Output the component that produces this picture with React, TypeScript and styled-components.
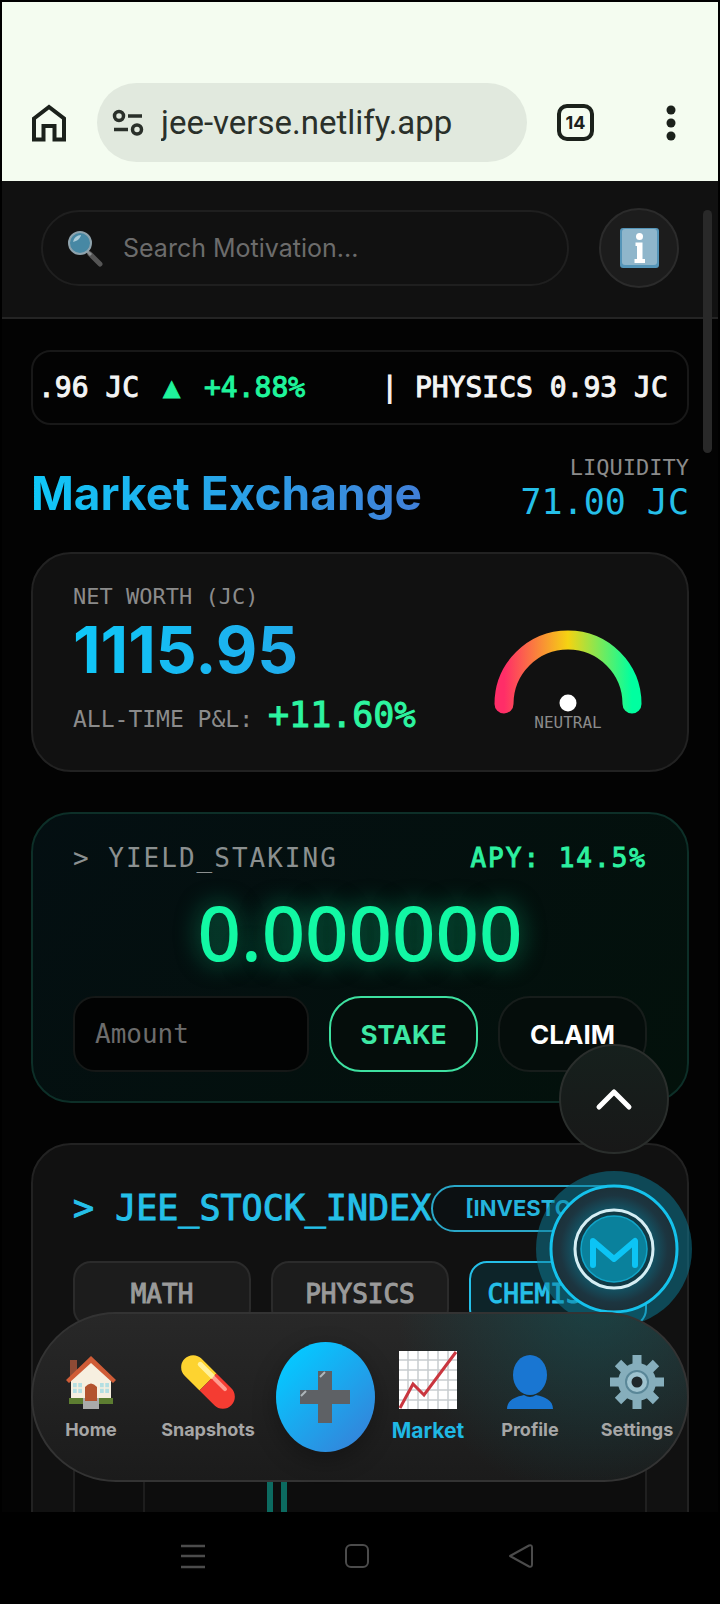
import React from "react";
import styled, { createGlobalStyle } from "styled-components";

const sans = `Inter, "Open Sans", sans-serif`;
const mono = `"DejaVu Sans Mono", monospace`;

const GlobalStyle = createGlobalStyle`
  * {
    box-sizing: border-box;
  }
  body {
    margin: 0;
    background: #000;
    color: #fff;
    font-family: ${sans};
  }
  button, input {
    font-family: inherit;
    margin: 0;
  }
  svg {
    display: block;
    flex: none;
  }
`;

const Phone = styled.div`
  display: flex;
  flex-direction: column;
  height: 100vh;
  padding: 2px 2px 0;
  overflow: hidden;
`;

const BrowserBar = styled.header`
  display: flex;
  align-items: center;
  flex: none;
  padding: 81px 41px 19px 29px;
  background: #f4fcf0;
`;

const BarButton = styled.button`
  display: flex;
  flex: none;
  padding: 0;
  border: 0;
  background: none;
`;

const Address = styled.div`
  display: flex;
  align-items: center;
  flex: 1;
  gap: 17px;
  min-width: 0;
  height: 79px;
  margin: 0 30px;
  padding: 0 15px;
  border-radius: 40px;
  background: #e1e9de;
`;

const AddressInput = styled.input`
  flex: 1;
  min-width: 0;
  padding: 0;
  border: 0;
  outline: 0;
  background: none;
  color: #2a302a;
  font-family: Roboto, sans-serif;
  font-size: 33px;
`;

const TabCount = styled.button`
  flex: none;
  width: 37px;
  height: 37px;
  margin-right: 71px;
  padding: 0;
  border: 4px solid #1b211b;
  border-radius: 10px;
  background: none;
  color: #1b211b;
  font-size: 18px;
  font-weight: 700;
  line-height: 28px;
`;

const Viewport = styled.div`
  position: relative;
  display: flex;
  flex-direction: column;
  flex: 1;
  min-height: 0;
  overflow: hidden;
  background: #030303;
`;

const SearchHeader = styled.div`
  display: flex;
  align-items: flex-start;
  justify-content: space-between;
  gap: 30px;
  flex: none;
  padding: 27px 39px 29px 39px;
  border-bottom: 2px solid #242424;
  background: #111;
`;

const SearchBox = styled.label`
  display: flex;
  align-items: center;
  flex: 1;
  gap: 19px;
  height: 76px;
  margin-top: 2px;
  padding: 0 23px;
  border: 2px solid #1f1f1f;
  border-radius: 38px;
`;

const SearchInput = styled.input`
  flex: 1;
  min-width: 0;
  padding: 0;
  border: 0;
  outline: 0;
  background: none;
  color: #fff;
  font-size: 25px;
  &::placeholder {
    color: #6c6c6c;
    opacity: 1;
  }
`;

const InfoButton = styled.button`
  display: flex;
  align-items: center;
  justify-content: center;
  width: 80px;
  height: 80px;
  padding: 0;
  border: 2px solid #2b2b2b;
  border-radius: 50%;
  background: #1c1c1c;
`;

const Content = styled.main`
  display: flex;
  flex-direction: column;
  flex: none;
  padding: 31px 29px;
`;

const Ticker = styled.div`
  display: flex;
  align-items: center;
  gap: 24px;
  height: 75px;
  padding: 0 5px;
  overflow: hidden;
  border: 2px solid #181818;
  border-radius: 20px;
  font-family: ${mono};
  font-size: 28px;
  white-space: nowrap;
  -webkit-text-stroke: 1px currentColor;
`;

const TickerItem = styled.span<{ $up?: boolean; $last?: boolean }>`
  color: ${(p) => (p.$up ? "#1ff59b" : "#f4f4f4")};
  margin-left: ${(p) => (p.$last ? "52px" : "0")};
`;

const TitleRow = styled.div`
  display: flex;
  align-items: flex-end;
  justify-content: space-between;
  height: 98px;
`;

const PageTitle = styled.h1`
  margin: 0;
  background: linear-gradient(90deg, #0fc8f8, #417fd8);
  background-clip: text;
  -webkit-background-clip: text;
  color: transparent;
  font-size: 46px;
  font-weight: 700;
  line-height: 60px;
`;

const Liquidity = styled.div`
  font-family: ${mono};
  text-align: right;
`;

const Caption = styled.div<{ $size?: number; $line?: number }>`
  color: #8b8b8b;
  font-family: ${mono};
  font-size: ${(p) => p.$size ?? 22}px;
  line-height: ${(p) => p.$line ?? 26}px;
`;

const Balance = styled.div`
  color: #25bfe8;
  font-size: 35px;
  line-height: 42px;
`;

const Card = styled.section<{ $tone?: "green" }>`
  margin-top: 40px;
  padding: 32px 40px 29px;
  border: 2px solid ${(p) => (p.$tone ? "#0d2f28" : "#222")};
  border-radius: 40px;
  background: ${(p) =>
    p.$tone ? "linear-gradient(135deg, #040f12, #03110b)" : "#111"};
`;

const NetWorth = styled(Card)`
  display: flex;
  align-items: center;
  justify-content: space-between;
  height: 220px;
  margin-top: 29px;
  padding: 0 45px 0 40px;
`;

const WorthValue = styled.div`
  background: linear-gradient(90deg, #0fc8f8, #3a80d8 160%);
  background-clip: text;
  -webkit-background-clip: text;
  color: transparent;
  font-size: 64px;
  font-weight: 700;
  line-height: 80px;
`;

const Profit = styled.div`
  display: flex;
  align-items: baseline;
  gap: 15px;
  line-height: 50px;
`;

const ProfitValue = styled.strong`
  color: #2df5a0;
  font-family: ${mono};
  font-size: 35px;
  font-weight: 400;
  -webkit-text-stroke: 1px currentColor;
`;

const Gauge = styled.div`
  display: flex;
  flex-direction: column;
  align-items: center;
  padding-top: 35px;
`;

const CardHead = styled.div`
  display: flex;
  align-items: center;
  justify-content: space-between;
  height: 48px;
`;

const StakeHead = styled(CardHead)`
  height: 24px;
  color: #8b9090;
  font-family: ${mono};
  font-size: 26px;
  letter-spacing: 2px;
`;

const Apy = styled.span`
  color: #2df0a0;
  -webkit-text-stroke: 1px currentColor;
`;

const Yield = styled.div`
  height: 126px;
  color: #12f8a4;
  font-family: "Noto Sans", sans-serif;
  font-size: 76px;
  font-weight: 500;
  line-height: 124px;
  text-align: center;
  text-shadow: 0 0 24px rgba(18, 248, 164, 0.5);
`;

const StakeForm = styled.div`
  display: grid;
  grid-template-columns: 236fr 149fr 149fr;
  gap: 20px;
`;

const AmountInput = styled.input`
  min-width: 0;
  height: 76px;
  padding: 0 20px;
  border: 2px solid #151817;
  border-radius: 22px;
  outline: 0;
  background: #020303;
  color: #fff;
  font-family: ${mono};
  font-size: 26px;
  &::placeholder {
    color: #6c6c6c;
    opacity: 1;
  }
`;

const ActionButton = styled.button<{ $primary?: boolean }>`
  height: 76px;
  padding: 0;
  border: 2px solid ${(p) => (p.$primary ? "#3ee0a0" : "#171d1b")};
  border-radius: 32px;
  background: #050d0b;
  color: ${(p) => (p.$primary ? "#3ee8a4" : "#fff")};
  font-size: 26px;
  font-weight: 700;
`;

const StockCard = styled(Card)`
  padding: 39px 40px;
`;

const StockTitle = styled.h2`
  margin: 0;
  color: #25bfe8;
  font-family: ${mono};
  font-size: 35px;
  font-weight: 400;
  -webkit-text-stroke: 1px currentColor;
  white-space: nowrap;
`;

const ModeButton = styled.button`
  flex: 1;
  height: 47px;
  padding: 0 0 0 32px;
  border: 2px solid #2aa7c8;
  border-radius: 24px;
  background: #0c1012;
  color: #25b4dc;
  font-size: 22px;
  font-weight: 700;
  text-align: left;
`;

const Tabs = styled.div`
  display: grid;
  grid-template-columns: repeat(3, 1fr);
  gap: 20px;
  margin-top: 29px;
`;

const Tab = styled.button<{ $active?: boolean }>`
  height: 66px;
  padding: 0;
  border: 2px solid ${(p) => (p.$active ? "#25bfe8" : "#2b2b2b")};
  border-radius: 18px;
  background: ${(p) => (p.$active ? "#0d2429" : "#1c1c1c")};
  color: ${(p) => (p.$active ? "#25bfe8" : "#9a9a9a")};
  font-family: ${mono};
  font-size: 26px;
  -webkit-text-stroke: 1px currentColor;
`;

const Chart = styled.div`
  display: flex;
  height: 400px;
  margin-top: 20px;
  padding-left: 68px;
  border: 2px solid #202020;
  background: #0d0d0d;
`;

const Plot = styled.div`
  display: flex;
  align-items: flex-end;
  flex: 1;
  gap: 8px;
  padding-left: 122px;
  border-left: 2px solid #1d1d1d;
`;

const Candle = styled.div`
  width: 6px;
  height: 360px;
  background: #0c6a60;
`;

const Scrollbar = styled.div`
  position: absolute;
  top: 29px;
  right: 6px;
  width: 9px;
  height: 243px;
  border-radius: 5px;
  background: #292929;
`;

const FloatStack = styled.div`
  position: absolute;
  right: 26px;
  bottom: 185px;
  display: flex;
  flex-direction: column;
  align-items: center;
  gap: 17px;
`;

const RoundButton = styled.button<{ $mentor?: boolean }>`
  display: flex;
  align-items: center;
  justify-content: center;
  width: ${(p) => (p.$mentor ? 156 : 110)}px;
  height: ${(p) => (p.$mentor ? 156 : 110)}px;
  padding: 0;
  border: ${(p) => (p.$mentor ? "0" : "2px solid #2a2e2c")};
  border-radius: 50%;
  background: ${(p) =>
    p.$mentor ? "none" : "linear-gradient(#16201d, #181818)"};
`;

const NavBar = styled.nav`
  position: absolute;
  right: 29px;
  bottom: 30px;
  left: 29px;
  display: grid;
  grid-template-columns: 116fr 118fr 116fr 90fr 114fr 100fr;
  height: 170px;
  border: 2px solid #333;
  border-radius: 85px;
  background: radial-gradient(
      circle at 86% -10%,
      rgba(15, 90, 95, 0.5),
      transparent 200px
    ),
    linear-gradient(#282828, #1b1b1b);
`;

const NavItem = styled.a<{ $active?: boolean }>`
  display: flex;
  flex-direction: column;
  align-items: center;
  justify-content: center;
  gap: 8px;
  padding-top: ${(p) => (p.$active ? 0 : 4)}px;
  color: ${(p) => (p.$active ? "#1fb8e4" : "#a6a6a6")};
  font-size: ${(p) => (p.$active ? 21 : 18)}px;
  font-weight: 700;
  line-height: 26px;
  text-decoration: none;
`;

const AddButton = styled.button`
  display: flex;
  align-items: center;
  justify-content: center;
  align-self: center;
  justify-self: center;
  width: 99px;
  height: 110px;
  padding: 0;
  border: 0;
  border-radius: 50%;
  background: linear-gradient(135deg, #06c6ff 15%, #3a7bd5);
  box-shadow: 0 8px 24px rgba(0, 0, 0, 0.3);
`;

const SystemBar = styled.footer`
  display: flex;
  justify-content: center;
  gap: 138px;
  flex: none;
  height: 92px;
  padding: 31px 6px 0 0;
`;

const HomeOutline = () => (
  <svg width="36" height="38" viewBox="0 0 36 38" fill="none" stroke="#1b211b" strokeWidth="4">
    <path d="M3 14.5 18 3l15 11.500V35.500H23.500V22H12.500V35.500H3Z" />
  </svg>
);

const TuneIcon = () => (
  <svg width="32" height="28" viewBox="0 0 32 28" fill="none" stroke="#2a302a" strokeWidth="3.500">
    <circle cx="7" cy="7" r="4.500" />
    <path d="M16 7h14M2 20.500h14" />
    <circle cx="25" cy="20.500" r="4.500" />
  </svg>
);

const DotsIcon = () => (
  <svg width="12" height="36" viewBox="0 0 12 36" fill="#1b211b">
    <circle cx="6" cy="5" r="4.500" />
    <circle cx="6" cy="18" r="4.500" />
    <circle cx="6" cy="31" r="4.500" />
  </svg>
);

const MagnifierIcon = () => (
  <svg width="38" height="38" viewBox="0 0 38 38">
    <path d="m24 25 10 10" stroke="#555" strokeWidth="5" strokeLinecap="round" />
    <path d="m20 21 5 5" stroke="#8b8f91" strokeWidth="3" />
    <circle cx="14" cy="14" r="11" fill="#4788a4" stroke="#8fa3ad" strokeWidth="2" />
    <path d="M7 13a8 8 0 0 1 8-7c-1 4-4 6-8 7Z" fill="#a9cbd8" />
  </svg>
);

const InfoIcon = () => (
  <svg width="39" height="40" viewBox="0 0 39 40">
    <rect width="39" height="40" rx="3" fill="#5595b8" />
    <rect x="2" y="1" width="35" height="36" rx="3" fill="#8fb6cb" />
    <circle cx="19.500" cy="8.500" r="3.500" fill="#fff" />
    <path d="M15.500 14.500h7V31h2.500v4H14.500v-4H17V18h-1.500Z" fill="#fff" />
  </svg>
);

const GaugeArc = () => (
  <svg width="148" height="86" viewBox="0 0 148 86" fill="none">
    <defs>
      <linearGradient id="mood" x1="0" x2="1" y1="0" y2="0">
        <stop offset="0" stopColor="#ff2d68" />
        <stop offset="0.5" stopColor="#f5d312" />
        <stop offset="1" stopColor="#00ffa0" />
      </linearGradient>
    </defs>
    <path d="M10 75a64 64 0 0 1 128 0" stroke="url(#mood)" strokeWidth="19" strokeLinecap="round" />
    <circle cx="74" cy="74" r="8.500" fill="#fff" />
  </svg>
);

const ChevronUp = () => (
  <svg width="38" height="24" viewBox="0 0 38 24" fill="none" stroke="#fff" strokeWidth="5" strokeLinecap="round" strokeLinejoin="round">
    <path d="M4 20 19 5l15 15" />
  </svg>
);

const MentorIcon = () => (
  <svg width="156" height="156" viewBox="0 0 156 156" fill="none">
    <defs>
      <radialGradient id="glow">
        <stop offset="0.5" stopColor="#0e6478" />
        <stop offset="0.85" stopColor="#1c3540" />
        <stop offset="1" stopColor="#1c3038" />
      </radialGradient>
    </defs>
    <circle cx="78" cy="78" r="78" fill="#0b7f9c" fillOpacity="0.5" />
    <circle cx="78" cy="78" r="63" fill="url(#glow)" stroke="#15c2ec" strokeWidth="3" />
    <circle cx="78" cy="78" r="39" fill="#103a46" stroke="#d5eef4" strokeWidth="3" />
    <circle cx="78" cy="78" r="33" fill="#0a819c" stroke="#12a5c8" strokeWidth="1.500" />
    <path d="M57 94V70l21 18 21-18v24" stroke="#0cc4f5" strokeWidth="6" strokeLinecap="round" strokeLinejoin="round" />
  </svg>
);

const HouseIcon = () => (
  <svg width="52" height="54" viewBox="0 0 52 54">
    <path d="M5 5h7v16H5Z" fill="#8d4a35" />
    <path d="M6 24 26 5l20 19v22H6Z" fill="#f6efe0" />
    <path d="M4 43h44v6H4Z" fill="#5d7d31" />
    <path d="M18 43h16v11H18Z" fill="#aaa" />
    <path d="M20 46V32q6-7 12 0v14Z" fill="#b3532f" />
    <path d="M8 28h9v10H8ZM35 28h9v10h-9Z" fill="#b4dfe2" />
    <path d="M12.500 28v10M39.500 28v10M8 33h9M35 33h9" stroke="#f6efe0" strokeWidth="1.500" />
    <path d="M1 25 26 1l25 24-3 3L26 8 4 28Z" fill="#cf5c37" />
  </svg>
);

const PillIcon = () => (
  <svg width="54" height="54" viewBox="0 0 54 54">
    <g transform="rotate(45 27 27)">
      <path d="M27 15H6a12 12 0 0 0 0 24h21Z" fill="#fdd330" />
      <path d="M27 15h21a12 12 0 0 1 0 24H27Z" fill="#f43c32" />
      <path d="M9 20h17" stroke="#fff19a" strokeWidth="5" strokeLinecap="round" />
      <path d="M29 20h15" stroke="#ff9c90" strokeWidth="4" strokeLinecap="round" />
    </g>
  </svg>
);

const PlusIcon = () => (
  <svg width="52" height="54" viewBox="0 0 52 54">
    <path d="M19 1h14v19h18v14H33v19H19V34H1V20h18Z" fill="#5e6165" />
    <path d="m21 7 5-5M2 26l5-5" stroke="#aeb6ba" strokeWidth="2" />
  </svg>
);

const ChartIcon = () => (
  <svg width="60" height="60" viewBox="0 0 60 60" fill="none">
    <rect x="1" y="1" width="58" height="58" fill="#fff" />
    <path
      d="M10 1v58M20 1v58M30 1v58M40 1v58M50 1v58M1 10h58M1 20h58M1 30h58M1 40h58M1 50h58"
      stroke="#c8cdd0"
      strokeWidth="1.500"
    />
    <path d="m2 58 13-24 11 11L58 2" stroke="#c9363f" strokeWidth="3" />
  </svg>
);

const PersonIcon = () => (
  <svg width="46" height="54" viewBox="0 0 46 54" fill="#1976d2">
    <ellipse cx="23" cy="20" rx="17" ry="20" />
    <path d="M0 54c0-9 8-12 17-14q6 4 12 0c9 2 17 5 17 14Z" />
  </svg>
);

const GearIcon = () => (
  <svg width="54" height="54" viewBox="0 0 54 54">
    <g stroke="#86aebc" strokeWidth="9">
      <path d="M27 0v54M0 27h54M8 8l38 38M46 8 8 46" />
    </g>
    <circle cx="27" cy="27" r="19" fill="#86aebc" />
    <circle cx="27" cy="27" r="11" fill="#9fc3cf" stroke="#5a8798" strokeWidth="2" />
    <circle cx="27" cy="27" r="5.500" fill="#20282b" />
  </svg>
);

const navLeft = [
  { label: "Home", icon: <HouseIcon /> },
  { label: "Snapshots", icon: <PillIcon /> },
];

const navRight = [
  { label: "Market", icon: <ChartIcon />, active: true },
  { label: "Profile", icon: <PersonIcon /> },
  { label: "Settings", icon: <GearIcon /> },
];

const App = () => {
  return (
    <>
      <GlobalStyle />
      <Phone>
        <BrowserBar>
          <BarButton aria-label="Home page">
            <HomeOutline />
          </BarButton>
          <Address>
            <TuneIcon />
            <AddressInput aria-label="Address" defaultValue="jee-verse.netlify.app" />
          </Address>
          <TabCount>14</TabCount>
          <BarButton aria-label="More">
            <DotsIcon />
          </BarButton>
        </BrowserBar>
        <Viewport>
          <SearchHeader>
            <SearchBox>
              <MagnifierIcon />
              <SearchInput aria-label="Search" placeholder="Search Motivation..." />
            </SearchBox>
            <InfoButton aria-label="Info">
              <InfoIcon />
            </InfoButton>
          </SearchHeader>
          <Content>
            <Ticker>
              <TickerItem>.96 JC</TickerItem>
              <TickerItem $up>▲</TickerItem>
              <TickerItem $up>+4.88%</TickerItem>
              <TickerItem $last>| PHYSICS 0.93 JC</TickerItem>
            </Ticker>
            <TitleRow>
              <PageTitle>Market Exchange</PageTitle>
              <Liquidity>
                <Caption>LIQUIDITY</Caption>
                <Balance>71.00 JC</Balance>
              </Liquidity>
            </TitleRow>
            <NetWorth>
              <div>
                <Caption>NET WORTH (JC)</Caption>
                <WorthValue>1115.95</WorthValue>
                <Profit>
                  <Caption as="span" $size={23}>
                    ALL-TIME P&amp;L:
                  </Caption>
                  <ProfitValue>+11.60%</ProfitValue>
                </Profit>
              </div>
              <Gauge>
                <GaugeArc />
                <Caption $size={16} $line={16}>
                  NEUTRAL
                </Caption>
              </Gauge>
            </NetWorth>
            <Card $tone="green">
              <StakeHead>
                <span>&gt; YIELD_STAKING</span>
                <Apy>APY: 14.5%</Apy>
              </StakeHead>
              <Yield>0.000000</Yield>
              <StakeForm>
                <AmountInput aria-label="Amount" placeholder="Amount" />
                <ActionButton $primary>STAKE</ActionButton>
                <ActionButton>CLAIM</ActionButton>
              </StakeForm>
            </Card>
            <StockCard>
              <CardHead>
                <StockTitle>&gt; JEE_STOCK_INDEX</StockTitle>
                <ModeButton>[INVESTOR]</ModeButton>
              </CardHead>
              <Tabs>
                <Tab>MATH</Tab>
                <Tab>PHYSICS</Tab>
                <Tab $active>CHEMISTRY</Tab>
              </Tabs>
              <Chart>
                <Plot>
                  <Candle />
                  <Candle />
                </Plot>
              </Chart>
            </StockCard>
          </Content>
          <Scrollbar />
          <FloatStack>
            <RoundButton aria-label="Back to top">
              <ChevronUp />
            </RoundButton>
            <RoundButton $mentor aria-label="Mentor">
              <MentorIcon />
            </RoundButton>
          </FloatStack>
          <NavBar>
            {navLeft.map((item) => (
              <NavItem key={item.label} href="#">
                {item.icon}
                {item.label}
              </NavItem>
            ))}
            <AddButton aria-label="Add">
              <PlusIcon />
            </AddButton>
            {navRight.map((item) => (
              <NavItem key={item.label} href="#" $active={item.active}>
                {item.icon}
                {item.label}
              </NavItem>
            ))}
          </NavBar>
        </Viewport>
        <SystemBar>
          <BarButton aria-label="Recent apps">
            <svg width="26" height="26" viewBox="0 0 26 26" stroke="#4b4b4b" strokeWidth="2.500">
              <path d="M1 3h24M1 13h24M1 24h24" />
            </svg>
          </BarButton>
          <BarButton aria-label="Home screen">
            <svg width="26" height="26" viewBox="0 0 26 26" fill="none" stroke="#4b4b4b" strokeWidth="2">
              <rect x="2" y="2" width="22" height="22" rx="5" />
            </svg>
          </BarButton>
          <BarButton aria-label="Back">
            <svg width="26" height="26" viewBox="0 0 26 26" fill="none" stroke="#4b4b4b" strokeWidth="2" strokeLinejoin="round">
              <path d="M2 13 21 2.500q3-1 3 2v17q0 3-3 2Z" />
            </svg>
          </BarButton>
        </SystemBar>
      </Phone>
    </>
  );
};

export default App;
